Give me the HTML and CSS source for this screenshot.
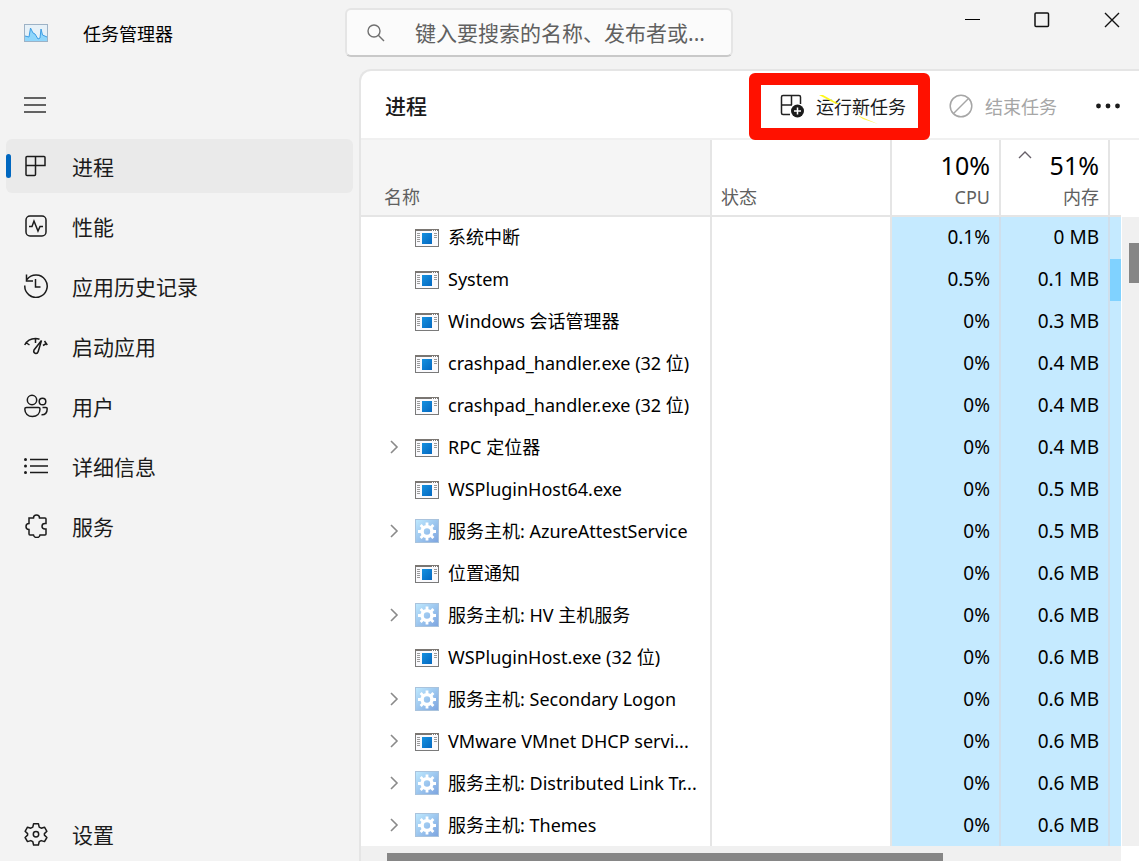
FILE: index.html
```html
<!DOCTYPE html>
<html lang="zh-CN">
<head>
    <meta charset="UTF-8">
    <meta name="viewport" content="width=device-width, initial-scale=1.0">
    <title>任务管理器</title>
    <link rel="stylesheet" href="styles.css">
</head>
<body>
    <!-- Shared process icons -->
    <svg class="sprites" aria-hidden="true">
        <defs>
            <linearGradient id="blueFill" x1="0" y1="0" x2="1" y2="1">
                <stop offset="0" stop-color="#1591e0"/>
                <stop offset="1" stop-color="#0568c0"/>
            </linearGradient>
            <linearGradient id="gearFill" x1="0" y1="0" x2="1" y2="1">
                <stop offset="0" stop-color="#bfeaff"/>
                <stop offset="1" stop-color="#7ba3df"/>
            </linearGradient>
            <symbol id="icon-app" viewBox="0 0 24 24">
                <rect x=".5" y="4.5" width="23" height="17" fill="#fafafd" stroke="#7a7a7a"/>
                <path d="M0 5h24" stroke="#7a7672" stroke-width="2"/>
                <path d="M17 5.500h1M19 5.500h1M21 5.500h1" stroke="#fff"/>
                <path d="M2 8.500h3M2 10.500h3M2 12.500h3M2 14.500h3M2 16.500h3M19 8.500h3M19 10.500h3M19 12.500h3" stroke="#9a9a9a"/>
                <rect x="7" y="8" width="10" height="11" fill="url(#blueFill)"/>
            </symbol>
            <symbol id="icon-gear" viewBox="0 0 24 24">
                <rect x=".5" y=".5" width="23" height="23" fill="url(#gearFill)" stroke="#a9c3dd"/>
                <circle cx="12" cy="12.500" r="4.900" fill="none" stroke="#fff" stroke-width="3.400"/>
                <path d="M12 3.500v4M12 17.500v4M3 12.500h4M17 12.500h4M5.600 6.100l2.900 2.900M15.500 16l2.900 2.900M18.400 6.100L15.500 9M8.500 16l-2.900 2.900" stroke="#fff" stroke-width="2.800"/>
            </symbol>
            <symbol id="icon-chevron" viewBox="0 0 8 14">
                <path d="M1 1l6 6-6 6" fill="none" stroke="#8a8a8a" stroke-width="1.6"/>
            </symbol>
        </defs>
    </svg>

    <header class="titlebar">
        <div class="brand">
            <svg class="brand-icon" width="24" height="18" viewBox="0 0 24 18">
                <rect x=".5" y=".5" width="23" height="17" fill="#e6f1f8" stroke="#9db2c6"/>
                <path d="M1 12l4 1 1.500-9L9 9l2 1 3 5 2-1 1-9 1.500 6L23 13v4H1z" fill="#8fd6fb"/>
                <path d="M1 12l4 1 1.500-9L9 9l2 1 3 5 2-1 1-9 1.500 6L23 13" fill="none" stroke="#3c9de4"/>
            </svg>
            <span class="brand-name">任务管理器</span>
        </div>
        <label class="search">
            <svg width="18" height="18" viewBox="0 0 18 18" fill="none" stroke="#707070" stroke-width="1.4">
                <circle cx="7" cy="7" r="6"/>
                <path d="M11.300 11.300L17 17"/>
            </svg>
            <input type="text" placeholder="键入要搜索的名称、发布者或..." aria-label="搜索">
        </label>
        <div class="window-buttons">
            <button type="button" aria-label="最小化"><svg width="16" height="16" viewBox="0 0 16 16"><path d="M1 7.500h15" stroke="#000"/></svg></button>
            <button type="button" aria-label="最大化"><svg width="16" height="16" viewBox="0 0 16 16"><rect x="1" y="1" width="13.500" height="13.500" rx="1" fill="none" stroke="#111" stroke-width="1.500"/></svg></button>
            <button type="button" aria-label="关闭"><svg width="16" height="16" viewBox="0 0 16 16"><path d="M1 1l14 14M15 1L1 15" stroke="#111" stroke-width="1.400"/></svg></button>
        </div>
    </header>

    <div class="layout">
        <aside class="sidebar">
            <button class="menu-button" type="button" aria-label="菜单">
                <svg width="24" height="24" viewBox="0 0 24 24" stroke="#333" stroke-width="1.500"><path d="M0 5h22M0 12h22M0 19h22"/></svg>
            </button>
            <nav>
                <a class="nav-item active" href="#processes">
                    <svg viewBox="0 0 24 24"><path d="M3 2.500h17q1 0 1 1v8H11.500v9q0 1-1 1H3q-1 0-1-1v-17q0-1 1-1zM11.500 2.500v9M2 11.500h9.500"/></svg>
                    进程
                </a>
                <a class="nav-item" href="#performance">
                    <svg viewBox="0 0 24 24"><rect x="2" y="2" width="20" height="20" rx="4"/><path d="M5 12.500h3l2-5.500 4 10 2-4.500h3"/></svg>
                    性能
                </a>
                <a class="nav-item" href="#history">
                    <svg viewBox="0 0 24 24"><path d="M.8 11.500A11.200 11.200 0 1 0 3 5.500M2.500.5v6.500h6.500M11.500 5v8h5"/></svg>
                    应用历史记录
                </a>
                <a class="nav-item" href="#startup">
                    <svg viewBox="0 0 24 24"><path d="M.7 11Q4 4.500 11.500 4.500q2 0 4 .7M1.800 8.500l3.700 2.500M11.500 4.500v4.500M20.500 7l2.800 4M19 11.500l3.500-2M17.500 6.500l-3.300 11q-.8 2.500-3 1.800-2.200-1-1.200-3.300z"/></svg>
                    启动应用
                </a>
                <a class="nav-item" href="#users">
                    <svg viewBox="0 0 24 24"><circle cx="8" cy="6" r="4.700"/><circle cx="18.500" cy="7.500" r="3.300"/><path d="M2.500 13.500h12q1.500 0 1.500 1.500c0 4.500-3 7.500-7.500 7.500S.8 19.500.8 15q0-1.500 1.700-1.500zM18.500 13.500h3.500q1.200 0 1.200 1.300c0 4-2 6.200-5.700 6"/></svg>
                    用户
                </a>
                <a class="nav-item" href="#details">
                    <svg viewBox="0 0 24 24"><path d="M6 5.500h18M6 12h18M6 18.500h18"/><g fill="#1b1b1b" stroke="none"><circle cx="1.500" cy="5.500" r="1.500"/><circle cx="1.500" cy="12" r="1.500"/><circle cx="1.500" cy="18.500" r="1.500"/></g></svg>
                    详细信息
                </a>
                <a class="nav-item" href="#services">
                    <svg viewBox="0 0 24 24"><path d="M5 4h4.500q0-3 3-3t3 3H21q1 0 1 1v4.500h-1q-3 0-3 2.700t3 2.800h1V20q0 1-1 1h-5q-.3 2.500-3.200 2.500T9.500 21H6q-1 0-1-1v-4.500q-3 0-3-3t3-3z"/></svg>
                    服务
                </a>
            </nav>
            <a class="nav-item settings" href="#settings">
                <svg viewBox="0 0 24 24"><path d="M9.600 1.700h4.800l.8 3.400 2 1.100 3.300-1 2.400 4.100-2.500 2.300v1.500l2.500 2.400-2.400 4.100-3.300-1-2 1.100-.8 3.300H9.600l-.8-3.300-2-1.100-3.300 1-2.400-4.100 2.500-2.400v-1.500L1.100 9.300l2.400-4.100 3.300 1 2-1.100z" stroke-linejoin="round"/><circle cx="12" cy="12.300" r="2.700"/></svg>
                设置
            </a>
        </aside>

        <main class="panel">
            <div class="toolbar">
                <h1>进程</h1>
                <button class="tool run-task" type="button">
                    <svg width="24" height="24" viewBox="0 0 24 24" fill="none" stroke="#222" stroke-width="1.500">
                        <path d="M10 20.500H3q-1.500 0-1.500-1.500V3q0-1.500 1.500-1.500h16q1.500 0 1.500 1.500v7M11.500 1.500v9.500M1.500 11H12"/>
                        <circle cx="17.500" cy="17" r="6.500" fill="#1b1b1b" stroke="none"/>
                        <path d="M14 17h7M17.500 13.500v7" stroke="#fff"/>
                    </svg>
                    运行新任务
                    <svg class="scribble" width="60" height="30" viewBox="0 0 60 30"><path d="M0 0l4 0 16 9-3 0z" fill="#fff81a"/><path d="M38 20l21 9-15-5z" fill="#fff64a"/></svg>
                </button>
                <button class="tool" type="button" disabled>
                    <svg width="24" height="24" viewBox="0 0 24 24" fill="none" stroke="#a6a6a6" stroke-width="1.500"><circle cx="12" cy="12" r="10.800"/><path d="M4.500 19.500l15-15"/></svg>
                    结束任务
                </button>
                <button class="more" type="button" aria-label="更多"><svg width="24" height="6" viewBox="0 0 24 6" fill="#1b1b1b"><circle cx="2.500" cy="3" r="2.400"/><circle cx="12" cy="3" r="2.400"/><circle cx="21.500" cy="3" r="2.400"/></svg></button>
            </div>

            <div class="table-area">
                <table>
                    <colgroup>
                        <col><col class="col-status"><col class="col-value"><col class="col-value"><col class="col-disk">
                    </colgroup>
                    <thead>
                        <tr>
                            <th class="name-head">名称</th>
                            <th>状态</th>
                            <th class="value"><strong>10%</strong>CPU</th>
                            <th class="value sorted">
                                <svg class="sort-arrow" width="14" height="8" viewBox="0 0 14 8"><path d="M1 7l6-6 6 6" fill="none" stroke="#665f68" stroke-width="1.400"/></svg>
                                <strong>51%</strong>内存
                            </th>
                            <th></th>
                        </tr>
                    </thead>
                    <tbody id="processList"></tbody>
                </table>
                <div class="scroll-y"><div class="thumb-y"></div></div>
            </div>
            <div class="scroll-x"><div class="thumb-x"></div></div>
        </main>
    </div>

    <script src="script.js"></script>
</body>
</html>
```

FILE: styles.css
```css
/* General Styles */
* {
    box-sizing: border-box;
}
body {
    margin: 0;
    height: 100vh;
    display: flex;
    flex-direction: column;
    overflow: hidden;
    background: #f3f3f3;
    color: #1b1b1b;
    font-family: 'Noto Sans', 'Noto Sans CJK SC', sans-serif;
    font-size: 18px;
}
button, input {
    font-family: inherit;
    font-size: inherit;
    color: inherit;
}
button {
    border: none;
    padding: 0;
    background: none;
}
svg {
    flex: none;
}
.sprites {
    position: absolute;
    width: 0;
    height: 0;
}

/* Title bar */
.titlebar {
    flex: none;
    display: flex;
    align-items: flex-start;
    height: 69px;
    padding-top: 8px;
}
.brand {
    flex: none;
    display: flex;
    align-items: center;
    width: 345px;
    height: 50px;
    padding-left: 24px;
    gap: 35px;
    color: #000;
}
.search {
    display: flex;
    align-items: center;
    width: 388px;
    height: 49px;
    padding: 0 20px;
    gap: 30px;
    background: #fbfbfb;
    border: 2px solid #e5e5e5;
    border-bottom-color: #c9c9c9;
    border-radius: 6px;
}
.search input {
    flex: 1;
    min-width: 0;
    padding: 0;
    border: none;
    outline: none;
    background: none;
    font-size: 21px;
}
.search input::placeholder {
    color: #606060;
    opacity: 1;
}
.window-buttons {
    display: flex;
    gap: 16px;
    margin-left: auto;
}
.window-buttons button {
    display: flex;
    align-items: center;
    justify-content: center;
    width: 54px;
    height: 24px;
}

/* Sidebar */
.layout {
    flex: 1;
    display: flex;
    min-height: 0;
}
.sidebar {
    flex: none;
    display: flex;
    flex-direction: column;
    width: 359px;
    padding: 24px 6px 0;
}
.menu-button {
    width: 60px;
    height: 24px;
    margin-bottom: 22px;
    padding-left: 18px;
    text-align: left;
}
.menu-button svg {
    display: block;
}
nav {
    display: flex;
    flex-direction: column;
    gap: 6px;
}
.nav-item {
    position: relative;
    display: flex;
    align-items: center;
    height: 54px;
    padding-left: 18px;
    gap: 24px;
    border-radius: 6px;
    color: #1b1b1b;
    font-size: 21px;
    text-decoration: none;
}
.nav-item svg {
    width: 24px;
    height: 24px;
    fill: none;
    stroke: #1b1b1b;
    stroke-width: 1.5;
}
.nav-item.active {
    background: #eaeaea;
}
.nav-item.active::before {
    content: "";
    position: absolute;
    left: 0;
    top: 15px;
    width: 5px;
    height: 24px;
    border-radius: 3px;
    background: #0067c0;
}
.settings {
    margin-top: auto;
}

/* Main panel */
.panel {
    flex: 1;
    min-width: 0;
    display: flex;
    flex-direction: column;
    overflow: hidden;
    background: #fff;
    border: 2px solid #e5e5e5;
    border-right: none;
    border-bottom: none;
    border-top-left-radius: 12px;
}
.toolbar {
    flex: none;
    display: flex;
    align-items: center;
    height: 69px;
    padding: 3px 19px 0 24px;
    border-bottom: 2px solid #f0f0f0;
}
.toolbar h1 {
    margin: 0 auto 0 0;
    font-size: 21px;
    font-weight: 500;
    line-height: 28px;
}
.tool {
    position: relative;
    display: flex;
    align-items: center;
    gap: 12px;
    height: 43px;
    margin-right: 39px;
}
.tool:disabled {
    color: #a6a6a6;
}
.run-task {
    margin-right: 31px;
    padding: 0 12px 0 19px;
}
.run-task::after {
    content: "";
    position: absolute;
    inset: -12px;
    border: 12px solid #ff1100;
    border-radius: 6px;
}
.scribble {
    position: absolute;
    left: 58px;
    top: 10px;
}
.more {
    display: flex;
}

/* Process table */
.table-area {
    flex: 1;
    min-height: 0;
    display: flex;
    overflow: hidden;
}
table {
    flex: 1;
    min-width: 0;
    table-layout: fixed;
    border-collapse: separate;
    border-spacing: 0;
    color: #000;
}
.col-status {
    width: 180px;
}
.col-value {
    width: 109px;
}
.col-disk {
    width: 11px;
}
th {
    height: 77px;
    padding: 0 9px 4px;
    border-right: 2px solid #e5e5e5;
    border-bottom: 2px solid #e5e5e5;
    color: #606060;
    font-weight: normal;
    line-height: 28px;
    text-align: left;
    vertical-align: bottom;
}
th:last-child {
    padding: 0;
    border-right: none;
}
.name-head {
    padding-left: 23px;
    background: #f5f5f5;
}
th strong {
    display: block;
    color: #000;
    font-size: 25px;
    font-weight: normal;
    line-height: 36px;
}
.value {
    text-align: right;
}
.sorted {
    position: relative;
}
.sort-arrow {
    position: absolute;
    left: 17px;
    top: 11px;
}
td {
    height: 42px;
    padding: 0 9px 2px;
    border-right: 2px solid #e5e5e5;
    line-height: 28px;
    white-space: nowrap;
}
td.value, td.disk {
    background: #c5eaff;
    border-right-color: #cfdfec;
    font-size: 19px;
}
td.disk {
    padding: 0;
    border-right: none;
}
td.disk.busy {
    background: #80d2ff;
}
.process {
    display: flex;
    align-items: center;
    padding-left: 19px;
}
.process .chevron {
    width: 10px;
    height: 14px;
    margin-right: 16px;
}
.process .icon {
    width: 24px;
    height: 24px;
    margin-right: 9px;
}

/* Scroll bars */
.scroll-y {
    flex: none;
    display: flex;
    justify-content: flex-end;
    width: 17px;
    margin: 77px 0 0 1px;
    padding-top: 26px;
    background: #f0f0f0;
}
.thumb-y {
    width: 10px;
    height: 40px;
    background: #868686;
}
.scroll-x {
    flex: none;
    height: 15px;
    margin-right: 18px;
    padding: 7px 178px 0 26px;
    background: #f0f0f0;
}
.thumb-x {
    height: 8px;
    background: #868686;
}
```

FILE: script.js
```js
const processes = [
    { name: '系统中断', cpu: '0.1%', memory: '0 MB' },
    { name: 'System', cpu: '0.5%', memory: '0.1 MB', busy: true },
    { name: 'Windows 会话管理器', cpu: '0%', memory: '0.3 MB' },
    { name: 'crashpad_handler.exe (32 位)', cpu: '0%', memory: '0.4 MB' },
    { name: 'crashpad_handler.exe (32 位)', cpu: '0%', memory: '0.4 MB' },
    { name: 'RPC 定位器', cpu: '0%', memory: '0.4 MB', group: true },
    { name: 'WSPluginHost64.exe', cpu: '0%', memory: '0.5 MB' },
    { name: '服务主机: AzureAttestService', cpu: '0%', memory: '0.5 MB', group: true, icon: 'gear' },
    { name: '位置通知', cpu: '0%', memory: '0.6 MB' },
    { name: '服务主机: HV 主机服务', cpu: '0%', memory: '0.6 MB', group: true, icon: 'gear' },
    { name: 'WSPluginHost.exe (32 位)', cpu: '0%', memory: '0.6 MB' },
    { name: '服务主机: Secondary Logon', cpu: '0%', memory: '0.6 MB', group: true, icon: 'gear' },
    { name: 'VMware VMnet DHCP servi...', cpu: '0%', memory: '0.6 MB', group: true },
    { name: '服务主机: Distributed Link Tr...', cpu: '0%', memory: '0.6 MB', group: true, icon: 'gear' },
    { name: '服务主机: Themes', cpu: '0%', memory: '0.6 MB', group: true, icon: 'gear' }
];

const processList = document.getElementById('processList');

processes.forEach(process => {
    const row = document.createElement('tr');
    row.innerHTML = `
        <td>
            <div class="process">
                <svg class="chevron">${process.group ? '<use href="#icon-chevron"/>' : ''}</svg>
                <svg class="icon"><use href="#icon-${process.icon || 'app'}"/></svg>
                <span>${process.name}</span>
            </div>
        </td>
        <td></td>
        <td class="value">${process.cpu}</td>
        <td class="value">${process.memory}</td>
        <td class="disk${process.busy ? ' busy' : ''}"></td>
    `;
    processList.appendChild(row);
});
```
